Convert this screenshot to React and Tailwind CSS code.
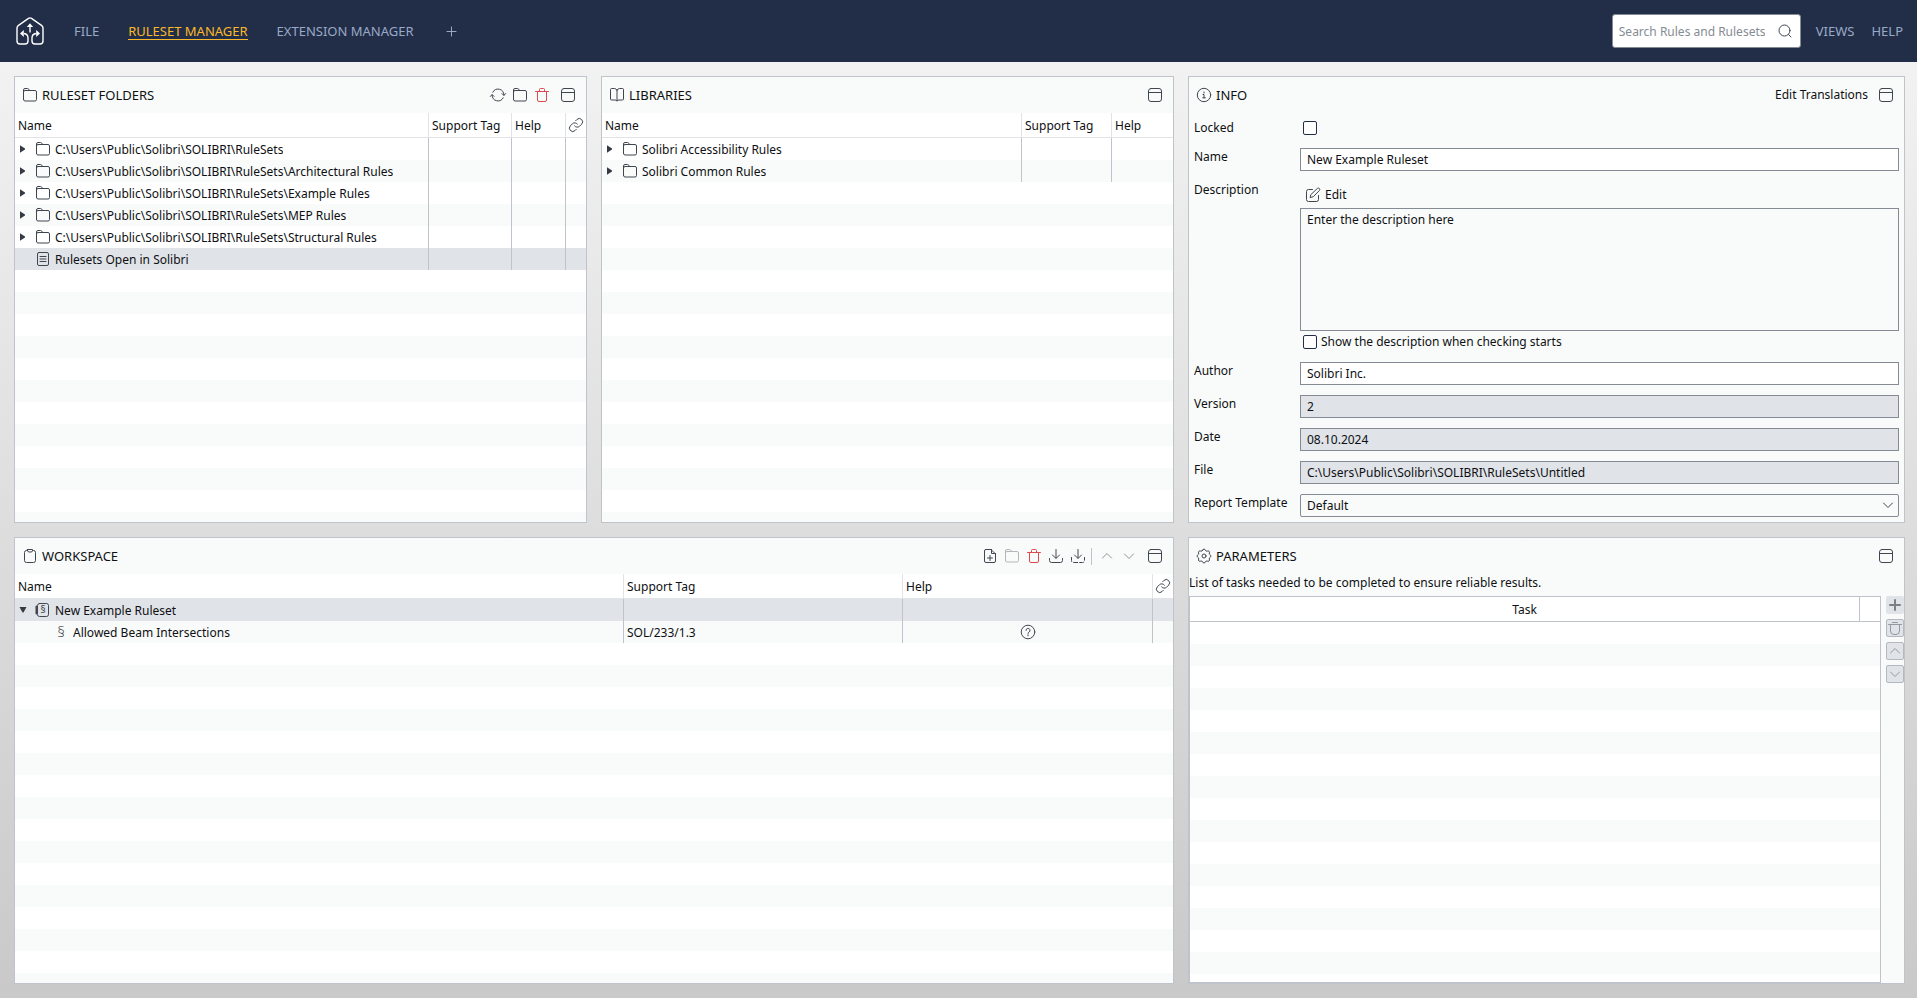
import { useState } from 'react'

const icons = {
  folder: (
    <path d="M1.5 12.5v-9.5q0-1.5 1.5-1.5h2.6q.7 0 1.1.6l.9 1.4h5.4q1.5 0 1.5 1.5v7.5q0 1.5-1.5 1.5h-10q-1.5 0-1.5-1.5M1.5 4.9q.1-1.4 1.5-1.4h4.6" />
  ),
  doc: (
    <>
      <rect x="2.5" y="1.5" width="11" height="13" rx="1.5" />
      <path d="M5 5.5h6M5 8h6M5 10.5h6" />
    </>
  ),
  refresh: <path d="M2.8 5.2A5.9 5.9 0 0 1 13.9 8M12 6.6l1.9 1.9 1.7-1.9M13.2 10.8A5.9 5.9 0 0 1 2.100 8M.4 9.400l1.700-1.900 1.900 1.900" />,
  trash: <path d="M1.5 4.5h13M5.5 4.5v-2q0-1 1-1h3q1 0 1 1v2M3.5 4.5v8.5q0 1.5 1.5 1.5h6q1.5 0 1.5-1.5v-8.5" />,
  collapse: (
    <>
      <rect x="1.5" y="1.5" width="13" height="13" rx="2.5" />
      <path d="M1.5 5.5h13" />
    </>
  ),
  book: <path d="M8 3.200v10.800M8 3.200q-.9-1.700-2.500-1.700h-3q-1 0-1 1v9.500q0 1 1 1h3.500q1.500 0 2 1 .5-1 2-1h3.500q1 0 1-1v-9.500q0-1-1-1h-3q-1.600 0-2.500 1.700" />,
  info: (
    <>
      <circle cx="8" cy="8" r="6.7" />
      <path d="M7 7.5h1v3.3M6.8 10.8h2.6M8 5v1" />
    </>
  ),
  help: (
    <>
      <circle cx="8" cy="8" r="6.8" />
      <path d="M6 6.4a2 2 0 1 1 3 1.7q-1 .5-1 1.3M8 10.8v1" />
    </>
  ),
  link: (
    <path d="M6.6 8.9a3.3 3.3 0 0 0 4.9.4l2.1-2.1a3.3 3.3 0 0 0-4.7-4.7l-1.2 1.2M9.4 7.1a3.3 3.3 0 0 0-4.9-.4l-2.1 2.1a3.3 3.3 0 0 0 4.7 4.7l1.2-1.2" />
  ),
  clipboard: (
    <path d="M5.5 2.5h-1q-2 0-2 2v8q0 2 2 2h7q2 0 2-2v-8q0-2-2-2h-1M5.5 1.5h5v1q0 1.5-1.5 1.5h-2q-1.5 0-1.5-1.5z" />
  ),
  gear: (
    <>
      <path d="M6.6 2.200a1.450 1.450 0 0 1 2.800 0 1.450 1.450 0 0 0 1.900.9 1.450 1.450 0 0 1 2 2 1.450 1.450 0 0 0 .8 1.700 1.450 1.450 0 0 1 0 2.600 1.450 1.450 0 0 0-.8 1.700 1.450 1.450 0 0 1-2 2 1.450 1.450 0 0 0-1.900.8 1.450 1.450 0 0 1-2.800 0 1.450 1.450 0 0 0-1.900-.8 1.450 1.450 0 0 1-2-2 1.450 1.450 0 0 0-.8-1.700 1.450 1.450 0 0 1 0-2.600 1.450 1.450 0 0 0 .8-1.700 1.450 1.450 0 0 1 2-2 1.450 1.450 0 0 0 1.900-.9z" />
      <circle cx="8" cy="8" r="2" />
    </>
  ),
  newDoc: (
    <path d="M3.5 1.5h5.5l4.5 4.5v7q0 1.5-1.5 1.5h-8q-1.5 0-1.5-1.5v-10q0-1.5 1-1.5M9.5 1.5v4h4M8 7.5v5M5.5 10h5" />
  ),
  importAll: <path d="M8 1.5v8.5M4.5 7l3.5 3.5 3.5-3.5M1.5 10.5v2q0 2 2 2h9q2 0 2-2v-2" />,
  importPart: (
    <>
      <path d="M8 1.5v8.5M4.5 7l3.5 3.5 3.5-3.5" />
      <path d="M1.5 9.5v3q0 2 2 2h9q2 0 2-2v-3" strokeDasharray="4 2" />
    </>
  ),
  up: <path d="M3.5 10l4.5-4.5 4.5 4.5" />,
  down: <path d="M3.5 6l4.5 4.5 4.5-4.5" />,
  plus: <path d="M8 3v10M3 8h10" />,
  thinPlus: <path d="M8.5 4v9M4 8.5h9" />,
  bin: <path d="M1.5 4.5h13M5.5 2.5h5M3.5 4.5v6.5q0 3.5 3.5 3.5h2q3.5 0 3.5-3.5v-6.5" />,
  search: (
    <>
      <circle cx="7.500" cy="7.500" r="5.500" />
      <path d="M11.500 11.500l2.500 2.500" />
    </>
  ),
  edit: (
    <path d="M7.5 2.5h-4q-2 0-2 2v8q0 2 2 2h8q2 0 2-2v-4M6 7.5l6.5-6.2q1-.6 1.9.2.8 1 .1 1.9l-6.2 6.3-2.8.8z" />
  ),
  ruleset: (
    <>
      <rect x="2.5" y="1.5" width="11" height="13" rx="2" />
      <path d="M1.5 4.5v7" strokeWidth="2" />
      <text x="8" y="11" fontSize="10" textAnchor="middle" fill="currentColor" stroke="none">§</text>
    </>
  ),
  rule: (
    <text x="8" y="13" fontSize="15" fontWeight="300" textAnchor="middle" fill="currentColor" stroke="none">§</text>
  ),
}

function Icon({ name, className = 'text-[#3f4650]' }) {
  return (
    <svg viewBox="0 0 16 16" className={`w-4 h-4 shrink-0 overflow-visible ${className}`} fill="none" stroke="currentColor"
      strokeWidth="1" strokeLinecap="round" strokeLinejoin="round" aria-hidden="true">
      {icons[name]}
    </svg>
  )
}

function IconButton({ icon, label, className, disabled }) {
  return (
    <button type="button" aria-label={label} disabled={disabled} className="w-[22px] h-[22px] flex items-center justify-center">
      <Icon name={icon} className={className} />
    </button>
  )
}

function Panel({ icon, title, tools, className = '', children }) {
  return (
    <section className={`flex flex-col min-w-0 min-h-0 border border-[#bfc4cc] bg-[#f9fbfa] ${className}`}>
      <header className="flex items-center h-9 pl-[7px] pr-[7px] shrink-0">
        <Icon name={icon} />
        <h2 className="ml-1 flex-1 text-[13px]">{title}</h2>
        <div className="flex items-center">{tools}</div>
        <div className="ml-1">
          <IconButton icon="collapse" label={`Collapse ${title}`} />
        </div>
      </header>
      {children}
    </section>
  )
}

function TreeCell({ row }) {
  return (
    <div className={`flex items-center h-[22px] ${row.child ? 'pl-[18px]' : ''}`}>
      <span className="w-4 flex justify-center">
        {row.arrow && (
          <svg viewBox="0 0 8 8" className="w-2 h-2" fill="#343b45" aria-hidden="true">
            {row.arrow === 'open' ? <path d="M.5 1h7l-3 5.5h-1z" /> : <path d="M1 .2v7.6l5-3.300v-1z" />}
          </svg>
        )}
      </span>
      <span className="mx-1"><Icon name={row.icon} /></span>
      <span className="truncate pt-[2px]">{row.name}</span>
    </div>
  )
}

function TreeTable({ label, columns, rows }) {
  return (
    <div className="flex-1 flex flex-col min-h-0 bg-white">
      <div className="flex-1 bg-[repeating-linear-gradient(to_bottom,#ffffff_0_22px,#f9fbfa_22px_44px)] bg-[position:0_25px]">
        <table aria-label={label} className="w-full table-fixed border-separate border-spacing-0">
          <thead>
            <tr className="bg-white">
              <th className="h-[25px] pt-[2px] pl-[3px] text-left font-normal border-b border-[#e1e3e6]">Name</th>
              {columns.map(c => c.key === 'link' ? (
                <th key={c.key} aria-label="Link" className={`h-[25px] pl-[2px] border-b border-l border-[#e1e3e6] ${c.width}`}>
                  <Icon name="link" />
                </th>
              ) : (
                <th key={c.key} className={`h-[25px] pt-[2px] pl-[3px] text-left font-normal border-b border-l border-[#e1e3e6] ${c.width}`}>
                  {c.title}
                </th>
              ))}
            </tr>
          </thead>
          <tbody>
            {rows.map(row => (
              <tr key={row.name} className={row.selected ? 'bg-[#e0e3e8]' : ''}>
                <td className="h-[22px]"><TreeCell row={row} /></td>
                {columns.map(c => (
                  <td key={c.key} className="h-[22px] px-[3px] border-l border-[#bfc4cc]">
                    {c.key === 'help' && row.help
                      ? <span className="flex justify-center"><Icon name="help" /></span>
                      : <span className="block pt-[2px]">{row[c.key]}</span>}
                  </td>
                ))}
              </tr>
            ))}
          </tbody>
        </table>
      </div>
    </div>
  )
}

const base = 'C:\\Users\\Public\\Solibri\\SOLIBRI\\RuleSets'

const folderRows = [
  { name: base, icon: 'folder', arrow: 'closed' },
  { name: `${base}\\Architectural Rules`, icon: 'folder', arrow: 'closed' },
  { name: `${base}\\Example Rules`, icon: 'folder', arrow: 'closed' },
  { name: `${base}\\MEP Rules`, icon: 'folder', arrow: 'closed' },
  { name: `${base}\\Structural Rules`, icon: 'folder', arrow: 'closed' },
  { name: 'Rulesets Open in Solibri', icon: 'doc', selected: true },
]

const libraryRows = [
  { name: 'Solibri Accessibility Rules', icon: 'folder', arrow: 'closed' },
  { name: 'Solibri Common Rules', icon: 'folder', arrow: 'closed' },
]

const workspaceRows = [
  { name: 'New Example Ruleset', icon: 'ruleset', arrow: 'open', selected: true },
  { name: 'Allowed Beam Intersections', icon: 'rule', child: true, support: 'SOL/233/1.3', help: true },
]

function Field({ id, label, children }) {
  return (
    <div className="flex items-start">
      <label htmlFor={id} className="w-[106px] shrink-0 leading-[18px]">{label}</label>
      <div className="flex-1 min-w-0">{children}</div>
    </div>
  )
}

function TextField({ id, label, value, readOnly }) {
  return (
    <Field id={id} label={label}>
      <input id={id} type="text" defaultValue={value} readOnly={readOnly}
        className={`block w-full h-[23px] px-[6px] border border-[#858b94] ${readOnly ? 'bg-[#e0e3e8]' : 'bg-white'}`} />
    </Field>
  )
}

function Checkbox({ id, checked, onChange }) {
  return (
    <input id={id} type="checkbox" checked={checked} onChange={e => onChange(e.target.checked)}
      className="appearance-none block w-[14px] h-[14px] ml-[3px] shrink-0 rounded-[2px] border border-[#222e47] bg-white checked:bg-[#222e47]" />
  )
}

function InfoForm() {
  const [locked, setLocked] = useState(false)
  const [show, setShow] = useState(false)

  return (
    <form className="flex flex-col gap-[10px] px-[5px] pt-[6px]">
      <Field id="locked" label="Locked">
        <div className="h-[19px] pt-[2px]"><Checkbox id="locked" checked={locked} onChange={setLocked} /></div>
      </Field>
      <TextField id="name" label="Name" value="New Example Ruleset" />
      <Field id="description" label="Description">
        <button type="button" className="flex items-center gap-1 h-[27px] pl-[5px]">
          <Icon name="edit" />
          Edit
        </button>
        <textarea id="description" defaultValue="Enter the description here"
          className="block w-full h-[123px] px-[6px] py-[2px] resize-none border border-[#858b94] bg-[#f9fbfa]" />
        <div className="flex items-center gap-1 h-[21px]">
          <Checkbox id="show" checked={show} onChange={setShow} />
          <label htmlFor="show">Show the description when checking starts</label>
        </div>
      </Field>
      <TextField id="author" label="Author" value="Solibri Inc." />
      <TextField id="version" label="Version" value="2" readOnly />
      <TextField id="date" label="Date" value="08.10.2024" readOnly />
      <TextField id="file" label="File" value={`${base}\\Untitled`} readOnly />
      <Field id="template" label="Report Template">
        <div className="relative">
          <select id="template" className="appearance-none block w-full h-[23px] px-[6px] rounded-[2px] border border-[#858b94] bg-[#f9fbfa]">
            <option>Default</option>
          </select>
          <span className="absolute right-[3px] top-[3px] pointer-events-none"><Icon name="down" /></span>
        </div>
      </Field>
    </form>
  )
}

function SideButton({ icon, label, disabled }) {
  return (
    <button type="button" aria-label={label} disabled={disabled}
      className={`w-[18px] h-[18px] flex items-center justify-center rounded-[2px] border bg-[#e0e3e8] ${disabled ? 'border-[#b4b9c1]' : 'border-[#e0e3e8]'}`}>
      <Icon name={icon} className={disabled ? 'text-[#95999f]' : 'text-[#7c8087] stroke-2'} />
    </button>
  )
}

function TopBar() {
  return (
    <header className="flex items-center h-[62px] shrink-0 bg-[#222e47] text-[13px] text-[#9aa9c8]">
      <svg viewBox="0 0 28 28" className="w-7 h-7 ml-4 shrink-0" fill="none" stroke="#fff" strokeWidth="1.4"
        strokeLinejoin="round" role="img" aria-label="Solibri">
        <path d="M8 16.500q4 .5 4 4.500v3q0 3-3 3h-5q-3 0-3-3v-13q0-1.700 1.500-2.700l10-6.900q1.500-1 3 0l10 6.900q1.500 1 1.500 2.700v13q0 3-3 3h-5q-3 0-3-3v-3q0-4 4-4.500M14 15.500v-7" />
        <path d="M14 6.300l3.200 3.700h-6.400zM4 16.500l3.800-3.400v6.800zM24 16.500l-3.800-3.400v6.800z" fill="#fff" stroke="none" />
      </svg>
      <nav className="flex items-center ml-[30px] gap-[29px]">
        <a href="#file">FILE</a>
        <a href="#rulesets" className="text-[#fbb829] border-b border-[#fbb829] -mb-px leading-4">RULESET MANAGER</a>
        <a href="#extensions">EXTENSION MANAGER</a>
        <button type="button" aria-label="Add view"><Icon name="thinPlus" className="text-[#9aa9c8]" /></button>
      </nav>
      <div className="ml-auto flex items-center">
        <div className="flex items-center w-[189px] h-[34px] pl-[6px] pr-[7px] bg-white border border-[#858b94] rounded-[3px]">
          <input type="search" aria-label="Search Rules and Rulesets" placeholder="Search Rules and Rulesets"
            className="flex-1 min-w-0 pt-[2px] text-[12px] text-[#0e1013] placeholder:text-[#858b94] outline-none" />
          <Icon name="search" />
        </div>
        <nav className="flex gap-[17px] ml-[15px] mr-[14px]">
          <a href="#views">VIEWS</a>
          <a href="#help">HELP</a>
        </nav>
      </div>
    </header>
  )
}

export default function App() {
  return (
    <div className="h-screen flex flex-col font-['Noto_Sans',sans-serif] text-[12px] leading-[18px] text-[#0e1013]">
      <TopBar />
      <main className="flex-1 min-h-0 grid grid-cols-[573fr_573fr_717fr] grid-rows-2 gap-[14px] pl-[14px] pr-3 py-[14px] bg-linear-to-b from-[#f2f2f2] to-[#c9c9c9]">
        <Panel icon="folder" title="RULESET FOLDERS" tools={
          <>
            <IconButton icon="refresh" label="Refresh" />
            <IconButton icon="folder" label="Open folder" />
            <IconButton icon="trash" label="Remove folder" className="text-[#dc4a4f]" />
          </>
        }>
          <TreeTable label="Ruleset folders" rows={folderRows} columns={[
            { key: 'support', title: 'Support Tag', width: 'w-[83px]' },
            { key: 'help', title: 'Help', width: 'w-[54px]' },
            { key: 'link', width: 'w-[21px]' },
          ]} />
        </Panel>

        <Panel icon="book" title="LIBRARIES">
          <TreeTable label="Libraries" rows={libraryRows} columns={[
            { key: 'support', title: 'Support Tag', width: 'w-[90px]' },
            { key: 'help', title: 'Help', width: 'w-[62px]' },
          ]} />
        </Panel>

        <Panel icon="info" title="INFO" tools={<button type="button" className="mr-[3px]">Edit Translations</button>}>
          <InfoForm />
        </Panel>

        <Panel icon="clipboard" title="WORKSPACE" className="col-span-2" tools={
          <>
            <IconButton icon="newDoc" label="New ruleset" />
            <IconButton icon="folder" label="Open ruleset" className="text-[#b3b6ba]" disabled />
            <IconButton icon="trash" label="Delete" className="text-[#dc4a4f]" />
            <IconButton icon="importAll" label="Save" />
            <IconButton icon="importPart" label="Save as" />
            <span className="w-px h-[17px] ml-[2px] mr-1 bg-[#bfc4cc]" />
            <IconButton icon="up" label="Move up" className="text-[#8f9399]" disabled />
            <IconButton icon="down" label="Move down" className="text-[#8f9399]" disabled />
          </>
        }>
          <TreeTable label="Workspace" rows={workspaceRows} columns={[
            { key: 'support', title: 'Support Tag', width: 'w-[279px]' },
            { key: 'help', title: 'Help', width: 'w-[250px]' },
            { key: 'link', width: 'w-[21px]' },
          ]} />
        </Panel>

        <Panel icon="gear" title="PARAMETERS">
          <p className="h-[22px]">List of tasks needed to be completed to ensure reliable results.</p>
          <div className="flex-1 min-h-0 flex gap-[5px]">
            <div className="flex-1 border border-[#bfc4cc] bg-[repeating-linear-gradient(to_bottom,#ffffff_0_22px,#f9fbfa_22px_44px)] bg-[position:0_25px]">
              <table aria-label="Tasks" className="w-full table-fixed border-separate border-spacing-0">
                <thead>
                  <tr className="bg-white">
                    <th className="h-[25px] pt-[2px] font-normal border-b border-[#bfc4cc]">Task</th>
                    <th aria-label="Actions" className="w-[21px] border-b border-l border-[#bfc4cc]" />
                  </tr>
                </thead>
              </table>
            </div>
            <div className="flex flex-col gap-[5px]">
              <SideButton icon="plus" label="Add task" />
              <SideButton icon="bin" label="Delete task" disabled />
              <SideButton icon="up" label="Move task up" disabled />
              <SideButton icon="down" label="Move task down" disabled />
            </div>
          </div>
        </Panel>
      </main>
    </div>
  )
}
